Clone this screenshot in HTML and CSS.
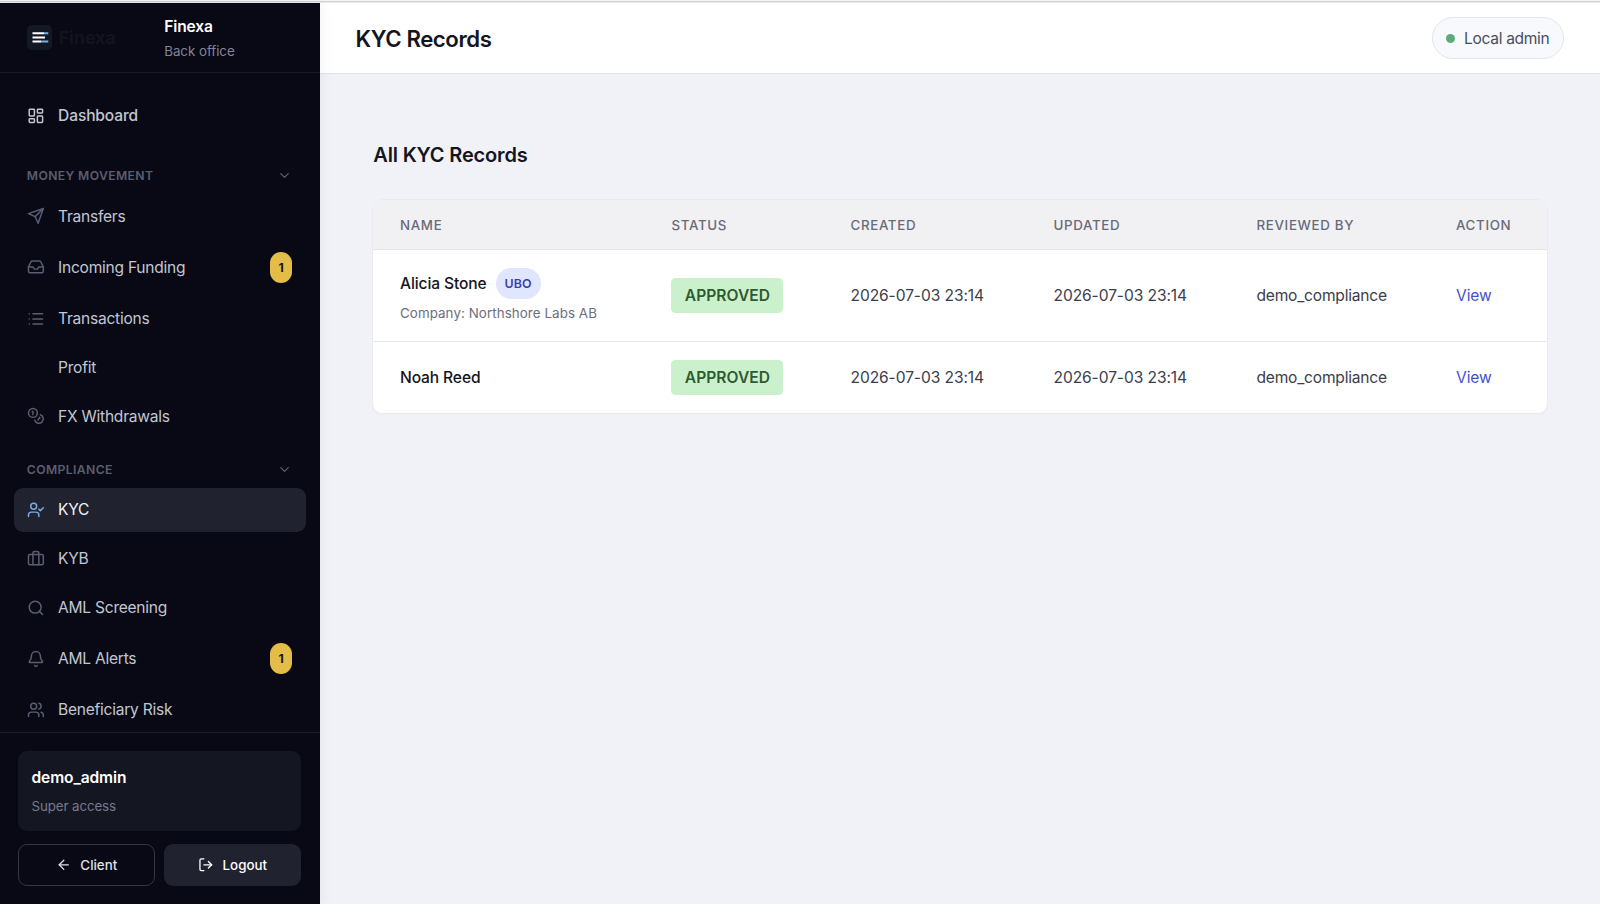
FILE: index.html
```html
<!DOCTYPE html>
<html lang="en">
<head>
<meta charset="utf-8">
<title>KYC Records</title>
<link rel="stylesheet" href="styles.css">
</head>
<body>
<div class="app">
  <aside class="sidebar">
    <div class="brand">
      <div class="brand-logo">
        <span class="brand-mark"><svg viewBox="0 0 25 25"><g stroke-width="2" stroke-linecap="butt"><path d="M5.500 8.200h11.500M5.500 12.400h12.500M5.500 16.600h9" stroke="#fff"/><path d="M17 8.200h4.300M14.500 16.600h6.800" stroke="#70b2ef"/></g></svg></span>
        <span class="brand-ghost">Finexa</span>
      </div>
      <div class="brand-text">
        <div class="brand-name">Finexa</div>
        <div class="brand-sub">Back office</div>
      </div>
    </div>
    <nav class="nav">
      <a class="item lead"><svg class="icon" viewBox="0 0 24 24"><rect x="3" y="3" width="7" height="9" rx="1"/><rect x="14" y="3" width="7" height="5" rx="1"/><rect x="14" y="12" width="7" height="9" rx="1"/><rect x="3" y="16" width="7" height="5" rx="1"/></svg><span>Dashboard</span></a>

      <div class="section first"><span>MONEY MOVEMENT</span><svg class="chevron" viewBox="0 0 24 24"><path d="m6 9 6 6 6-6"/></svg></div>
      <a class="item"><svg class="icon" viewBox="0 0 24 24"><path d="m22 2-7 20-4-9-9-4Z"/><path d="M22 2 11 13"/></svg><span>Transfers</span></a>
      <a class="item"><svg class="icon" viewBox="0 0 24 24"><path d="M22 12h-6l-2 3h-4l-2-3H2"/><path d="M5.450 5.110 2 12v6a2 2 0 0 0 2 2h16a2 2 0 0 0 2-2v-6l-3.450-6.890A2 2 0 0 0 16.760 4H7.240a2 2 0 0 0-1.790 1.110z"/></svg><span>Incoming Funding</span><span class="count">1</span></a>
      <a class="item"><svg class="icon" viewBox="0 0 24 24"><path d="M8 5h13M8 12h13M8 19h13M3 5h.01M3 12h.01M3 19h.01"/></svg><span>Transactions</span></a>
      <a class="item"><span class="icon"></span><span>Profit</span></a>
      <a class="item"><svg class="icon" viewBox="0 0 24 24"><circle cx="8" cy="8" r="6"/><path d="M18.090 10.370A6 6 0 1 1 10.340 18"/><path d="M7 6h1v4"/><path d="m16.710 13.880.7.710-2.820 2.820"/></svg><span>FX Withdrawals</span></a>

      <div class="section"><span>COMPLIANCE</span><svg class="chevron" viewBox="0 0 24 24"><path d="m6 9 6 6 6-6"/></svg></div>
      <a class="item active"><svg class="icon" viewBox="0 0 24 24"><path d="m16 11 2 2 4-4"/><path d="M16 21v-2a4 4 0 0 0-4-4H6a4 4 0 0 0-4 4v2"/><circle cx="9" cy="7" r="4"/></svg><span>KYC</span></a>
      <a class="item"><svg class="icon" viewBox="0 0 24 24"><path d="M16 20V4a2 2 0 0 0-2-2h-4a2 2 0 0 0-2 2v16"/><rect x="2" y="6" width="20" height="14" rx="2"/></svg><span>KYB</span></a>
      <a class="item"><svg class="icon" viewBox="0 0 24 24"><circle cx="11" cy="11" r="8"/><path d="m21 21-4.300-4.300"/></svg><span>AML Screening</span></a>
      <a class="item"><svg class="icon" viewBox="0 0 24 24"><path d="M10.268 21a2 2 0 0 0 3.464 0"/><path d="M3.262 15.326A1 1 0 0 0 4 17h16a1 1 0 0 0 .740-1.673C19.410 13.956 18 12.499 18 8A6 6 0 0 0 6 8c0 4.499-1.411 5.956-2.738 7.326"/></svg><span>AML Alerts</span><span class="count">1</span></a>
      <a class="item"><svg class="icon" viewBox="0 0 24 24"><path d="M16 21v-2a4 4 0 0 0-4-4H6a4 4 0 0 0-4 4v2"/><circle cx="9" cy="7" r="4"/><path d="M22 21v-2a4 4 0 0 0-3-3.870"/><path d="M16 3.130a4 4 0 0 1 0 7.750"/></svg><span>Beneficiary Risk</span></a>
    </nav>
    <div class="account">
      <div class="user">
        <div class="user-name">demo_admin</div>
        <div class="user-role">Super access</div>
      </div>
      <div class="actions">
        <a class="button outline"><svg viewBox="0 0 24 24"><path d="m12 19-7-7 7-7"/><path d="M19 12H5"/></svg>Client</a>
        <a class="button solid"><svg viewBox="0 0 24 24"><path d="m16 17 5-5-5-5"/><path d="M21 12H9"/><path d="M9 21H5a2 2 0 0 1-2-2V5a2 2 0 0 1 2-2h4"/></svg>Logout</a>
      </div>
    </div>
  </aside>
  <div class="main">
    <header class="topbar">
      <h1>KYC Records</h1>
      <div class="role"><span class="dot"></span>Local admin</div>
    </header>
    <main class="content">
      <h2>All KYC Records</h2>
      <div class="card">
        <table>
          <colgroup><col class="c-name"><col class="c-status"><col class="c-date"><col class="c-date"><col class="c-reviewer"><col></colgroup>
          <thead><tr><th>NAME</th><th>STATUS</th><th>CREATED</th><th>UPDATED</th><th>REVIEWED BY</th><th>ACTION</th></tr></thead>
          <tbody>
            <tr class="tall"><td><div class="person">Alicia Stone<span class="tag">UBO</span></div><div class="company">Company: Northshore Labs AB</div></td><td><span class="status">APPROVED</span></td><td>2026-07-03 23:14</td><td>2026-07-03 23:14</td><td class="reviewer">demo_compliance</td><td><a class="view">View</a></td></tr>
            <tr><td><div class="person">Noah Reed</div></td><td><span class="status">APPROVED</span></td><td>2026-07-03 23:14</td><td>2026-07-03 23:14</td><td class="reviewer">demo_compliance</td><td><a class="view">View</a></td></tr>
          </tbody>
        </table>
      </div>
    </main>
  </div>
</div>
</body>
</html>
```
FILE: styles.css
```css
* { box-sizing: border-box; }
body { margin: 0; font-family: Inter, "Liberation Sans", sans-serif; font-size: 15.56px; color: #3b3d4b; background: #f1f2f7; }
.app { display: flex; height: 904px; padding-top: 3px; overflow: hidden; background: linear-gradient(#f4f4f5 0 1px, #d3d4d7 1px 2px, #e9eaec 2px 3px, #f1f2f7 3px); }
svg { display: block; fill: none; stroke: currentColor; stroke-width: 2; stroke-linecap: round; stroke-linejoin: round; }

.sidebar { flex: none; width: 320px; display: flex; flex-direction: column; background: #080914; color: #c3c6d2; box-shadow: 0 0 14px rgba(20, 22, 50, .07); position: relative; }
.brand { flex: none; height: 70px; border-bottom: 1px solid #1b1c27; padding: 0 26.700px; display: flex; align-items: center; }
.brand-logo { width: 137.500px; display: flex; align-items: center; gap: 7px; }
.brand-mark { width: 25px; height: 25px; border-radius: 5px; background: #141823; }
.brand-ghost { font-size: 18px; font-weight: 700; letter-spacing: -.15px; color: #12131e; }
.brand-name { font-weight: 600; letter-spacing: -.1px; color: #fff; line-height: 22px; }
.brand-sub { font-size: 13.330px; line-height: 18px; margin-top: 4px; color: #81849a; letter-spacing: -.03px; }

.nav { flex: 1; min-height: 0; overflow: hidden; padding: 20.600px 14.500px 0 13.500px; display: flex; flex-direction: column; gap: 4.440px; }
.item { flex: none; display: flex; align-items: center; min-height: 44.440px; padding: 8.900px 13.300px; border-radius: 9px; letter-spacing: -.25px; }
.item .icon { flex: none; width: 17.800px; height: 17.800px; margin-right: 13.500px; color: #5a5e73; }
.item.lead .icon { color: #c3c6d2; }
.item.lead { font-weight: 500; letter-spacing: -.13px; }
.item.active { background: #20222f; color: #f1f2f6; }
.item.active .icon { color: #7dace0; }
.count { margin-left: auto; width: 22.500px; height: 31.100px; border-radius: 12px; background: #e3bd47; color: #15141c; font-size: 12.200px; font-weight: 700; display: flex; align-items: center; justify-content: center; }
.section { flex: none; display: flex; align-items: center; justify-content: space-between; height: 18px; margin: 17.200px 13.300px 5.300px; font-size: 12.200px; font-weight: 600; letter-spacing: .38px; color: #5a5e70; }
.section.first { margin-top: 23.800px; }
.chevron { width: 15px; height: 15px; }

.account { flex: none; height: 172px; border-top: 1px solid #1b1c27; padding: 18px 19px 0 18px; }
.user { height: 79.500px; border-radius: 9px; background: #141621; padding: 16px 13.500px; }
.user-name { color: #fff; font-weight: 600; letter-spacing: -.1px; line-height: 22px; }
.user-role { margin-top: 8px; font-size: 13.330px; line-height: 18px; color: #777a8f; letter-spacing: -.1px; }
.actions { display: grid; grid-template-columns: 1fr 1fr; gap: 9px; margin-top: 13.500px; }
.button { height: 42px; border-radius: 9px; display: flex; align-items: center; justify-content: center; gap: 9px; font-size: 13.330px; font-weight: 500; color: #dfe1e8; }
.button svg { width: 15.600px; height: 15.600px; }
.outline { border: 1px solid #343644; }
.solid { background: #20222f; color: #fff; }

.main { flex: 1; min-width: 0; }
.topbar { height: 71px; background: #fff; border-bottom: 1px solid #e2e3ea; padding: 0 35.600px; display: flex; align-items: center; justify-content: space-between; }
h1 { margin: 0; font-size: 22.200px; font-weight: 600; letter-spacing: -.42px; color: #141522; }
.role { height: 42px; padding: 0 14px 0 13.500px; border: 1px solid #e3e5f0; border-radius: 21px; background: #f8f9fc; display: flex; align-items: center; gap: 9px; letter-spacing: -.32px; color: #4a4d60; }
.dot { width: 9px; height: 9px; border-radius: 50%; background: #5dab7b; }

.content { padding: 66.500px 53.300px 0; }
h2 { margin: 0 0 31px; font-size: 20px; line-height: 28px; font-weight: 600; letter-spacing: -.17px; color: #141522; }
.card { border-radius: 9px; overflow: hidden; background: #fff; box-shadow: 0 0 0 1px #e9ebf1, 0 1px 2px rgba(20, 22, 50, .04); }
table { width: 100%; border-collapse: collapse; table-layout: fixed; }
.c-name { width: 271.500px; }
.c-status { width: 179px; }
.c-date { width: 203px; }
.c-reviewer { width: 199.500px; }
th { height: 50px; padding: 1px 26.700px 0; text-align: left; background: #f1f1f4; font-size: 13.330px; font-weight: 500; letter-spacing: .660px; color: #686a77; white-space: nowrap; border-bottom: 1px solid #e4e5eb; }
td { height: 71.500px; padding: 0 26.700px; white-space: nowrap; letter-spacing: -.07px; }
.tall td { height: 92px; border-bottom: 1px solid #e5e7ee; }
.tall td:first-child { padding-bottom: 2px; }
.reviewer { letter-spacing: -.2px; }
.person { display: flex; align-items: center; font-weight: 500; letter-spacing: -.1px; color: #141522; }
.tag { height: 31px; margin-left: 9px; padding: 0 9px; border-radius: 16px; background: #dfe6fd; color: #3d3da8; font-size: 12.400px; font-weight: 600; letter-spacing: .1px; display: flex; align-items: center; }
.company { font-size: 13.330px; line-height: 18px; margin-top: 5px; color: #6c6e7c; letter-spacing: .09px; }
.status { display: inline-flex; align-items: center; height: 35.500px; padding: 0 13.300px; border-radius: 4.500px; background: #cbf1cc; color: #2e5a33; font-weight: 600; letter-spacing: .06px; }
.view { color: #4650cf; }
```
